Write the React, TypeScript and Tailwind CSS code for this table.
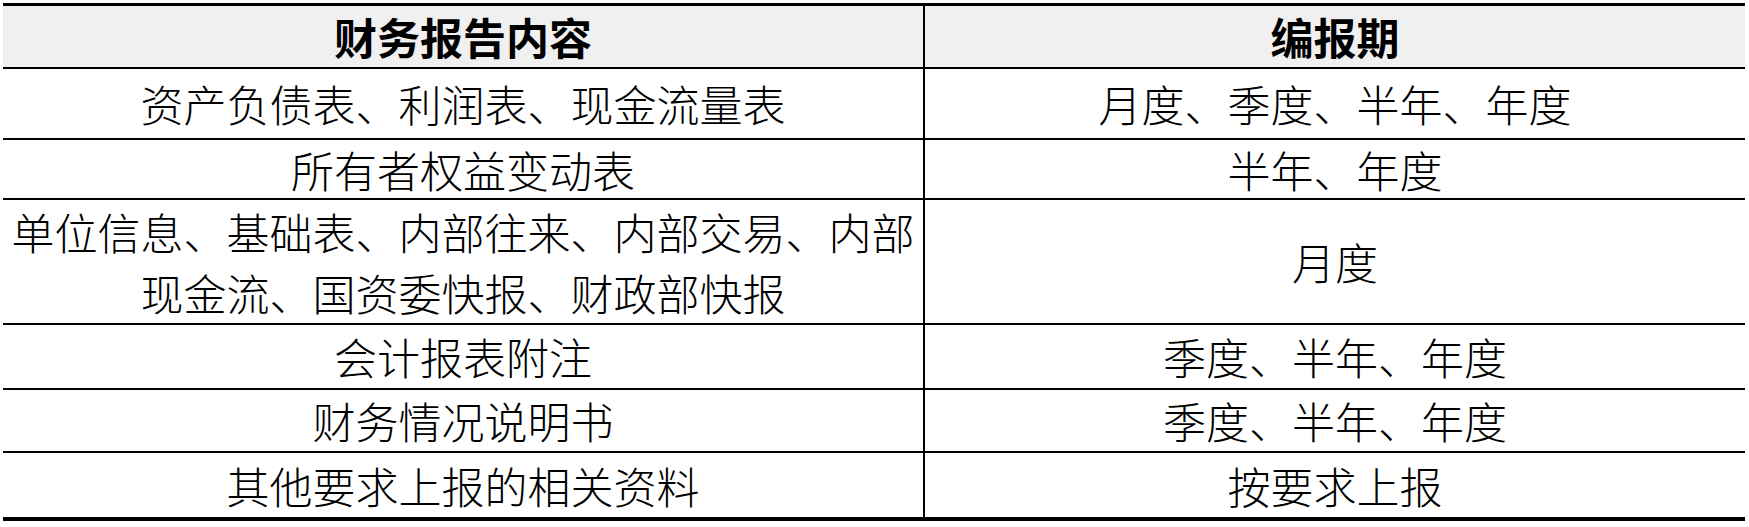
import React from 'react';

const rows: { content: React.ReactNode; period: string; h: string }[] = [
  { content: '资产负债表、利润表、现金流量表', period: '月度、季度、半年、年度', h: 'h-[71px]' },
  { content: '所有者权益变动表', period: '半年、年度', h: 'h-[60px]' },
  {
    content: (
      <>
        单位信息、基础表、内部往来、内部交易、内部
        <br />
        现金流、国资委快报、财政部快报
      </>
    ),
    period: '月度',
    h: 'h-[125px]',
  },
  { content: '会计报表附注', period: '季度、半年、年度', h: 'h-[65px]' },
  { content: '财务情况说明书', period: '季度、半年、年度', h: 'h-[63px]' },
  { content: '其他要求上报的相关资料', period: '按要求上报', h: 'h-[64px]' },
];

const App: React.FC = () => {
  return (
    <div className="w-[1749px] h-[527px] bg-white pt-[3px] pl-[3px] font-['Noto_Sans_CJK_SC',sans-serif] text-black">
      <div className="w-[1742px] border-t-[3px] border-b-[4px] border-black">
        {/* Header */}
        <div className="flex h-[63px] bg-[#f0f0f0] border-b-2 border-black font-bold text-[43px] leading-none">
          <div className="w-[922px] border-r-2 border-black flex items-center justify-center">财务报告内容</div>
          <div className="flex-1 flex items-center justify-center">编报期</div>
        </div>

        {rows.map((row, i) => (
          <div
            key={i}
            className={`flex ${row.h} ${i < rows.length - 1 ? 'border-b-2 border-black' : ''} font-light text-[43px]`}
          >
            <div className="w-[922px] border-r-2 border-black flex items-center justify-center text-center leading-[61px] whitespace-nowrap">
              <div>{row.content}</div>
            </div>
            <div className="flex-1 flex items-center justify-center leading-none">{row.period}</div>
          </div>
        ))}
      </div>
    </div>
  );
};

export default App;
